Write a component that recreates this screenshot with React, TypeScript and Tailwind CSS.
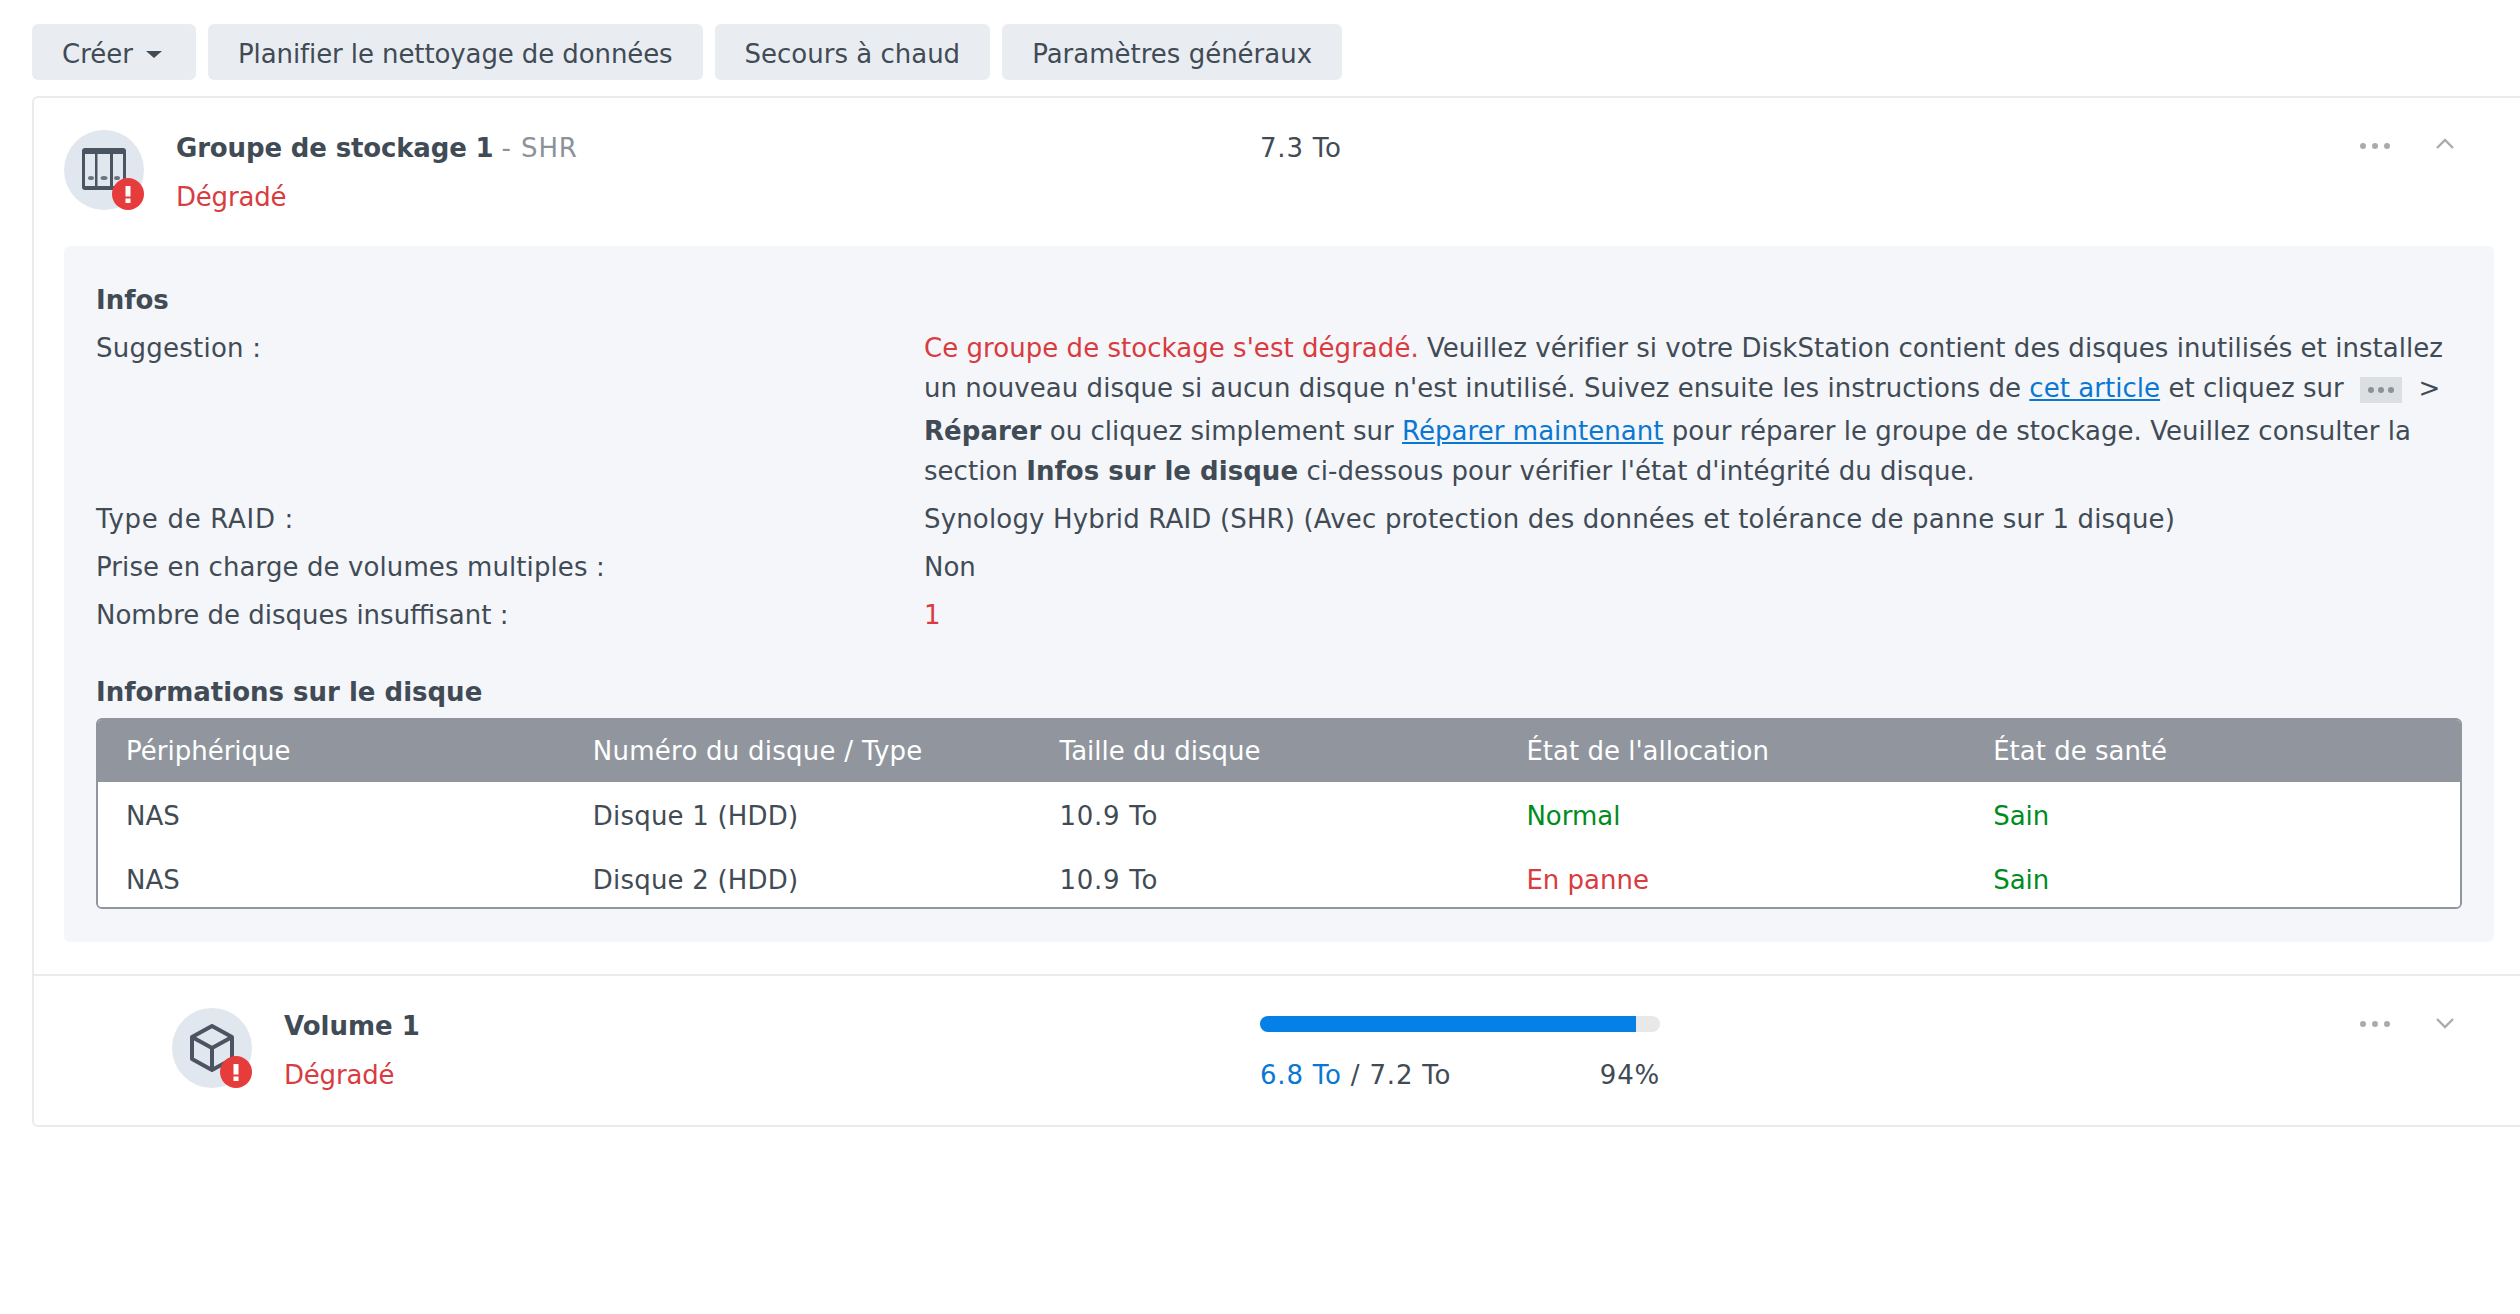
const rows = [
  { device: 'NAS', disk: 'Disque 1 (HDD)', size: '10.9 To', alloc: 'Normal', allocColor: 'text-[#008c1e]' },
  { device: 'NAS', disk: 'Disque 2 (HDD)', size: '10.9 To', alloc: 'En panne', allocColor: 'text-[#d93b3f]' },
];

function Dots() {
  return (
    <svg width="30" height="6" viewBox="0 0 30 6" fill="#a8acb0">
      <circle cx="3" cy="3" r="3" />
      <circle cx="15" cy="3" r="3" />
      <circle cx="27" cy="3" r="3" />
    </svg>
  );
}

function Chevron({ up }: { up?: boolean }) {
  return (
    <svg width="18" height="11" viewBox="0 0 18 11" fill="none" stroke="#a8acb0" strokeWidth="2.4" className={up ? '-translate-y-[3px]' : ''}>
      <path d={up ? 'M1 10 L9 2 L17 10' : 'M1 1 L9 9 L17 1'} />
    </svg>
  );
}

function Badge() {
  return (
    <svg width="32" height="32" viewBox="0 0 32 32" className="absolute right-0 bottom-0">
      <circle cx="16" cy="16" r="16" fill="#e63c3c" />
      <rect x="13.5" y="8" width="5" height="10.5" fill="#fff" />
      <rect x="13.5" y="20.5" width="5" height="4.5" fill="#fff" />
    </svg>
  );
}

function Actions({ up }: { up?: boolean }) {
  return (
    <div className="ml-auto flex items-center gap-[46px] pr-[84px]">
      <Dots />
      <Chevron up={up} />
    </div>
  );
}

function Row({ label, labelClass, children }: { label: string; labelClass?: string; children: React.ReactNode }) {
  return (
    <div className="flex py-1">
      <div className={`w-[828px] shrink-0 ${labelClass ?? ''}`}>{label}</div>
      <div className="flex-1">{children}</div>
    </div>
  );
}

export default function App() {
  return (
    <div className="h-[1314px] overflow-hidden bg-white pt-6 pl-8 font-['DejaVu_Sans',sans-serif] text-[26px] leading-10 text-[#414b55]">
      <div className="flex gap-3">
        <button className="flex h-14 items-center gap-[13px] rounded-md bg-[#e9edf2] pt-1 pr-[34px] pl-[30px]">
          Créer
          <span className="h-0 w-0 border-x-[8px] border-t-[7px] border-x-transparent border-t-[#414b55]" />
        </button>
        <button className="h-14 rounded-md bg-[#e9edf2] px-[30px] pt-1 tracking-[-0.1px]">Planifier le nettoyage de données</button>
        <button className="h-14 rounded-md bg-[#e9edf2] px-[30px] pt-1">Secours à chaud</button>
        <button className="h-14 rounded-md bg-[#e9edf2] px-[30px] pt-1">Paramètres généraux</button>
      </div>

      <div className="mt-4 mr-[-20px] rounded-l-md border-2 border-[#ebebeb]">
        <div className="flex h-[148px] pt-8 pl-[30px]">
          <div className="relative flex h-20 w-20 shrink-0 items-center justify-center rounded-full bg-[#e1e7ee]">
            <svg width="44" height="42" viewBox="0 0 44 42" className="-translate-y-[1px]">
              <rect x="0" y="0" width="44" height="42" rx="3" fill="#4a5561" />
              <rect x="3" y="6" width="10" height="32" fill="#e1e7ee" />
              <rect x="15.5" y="6" width="12.5" height="32" fill="#e1e7ee" />
              <rect x="31" y="6" width="10" height="32" fill="#e1e7ee" />
              <ellipse cx="9" cy="30" rx="3" ry="2" fill="#6b7580" />
              <ellipse cx="22" cy="30" rx="3.5" ry="2" fill="#6b7580" />
              <ellipse cx="35" cy="30" rx="3" ry="2" fill="#6b7580" />
            </svg>
            <Badge />
          </div>
          <div className="ml-8 w-[1084px] shrink-0">
            <div className="-mt-[2px] flex h-10 items-center">
              <span className="font-bold tracking-[-0.15px]">Groupe de stockage 1</span>
              <span className="ml-2 tracking-[0.9px] text-[#8c9299]">- SHR</span>
            </div>
            <div className="mt-[9px] tracking-[-0.2px] text-[#d93b3f]">Dégradé</div>
          </div>
          <div className="-mt-[2px] tracking-[0.8px]">7.3 To</div>
          <div className="-mt-[4px] flex h-10 flex-1 items-center">
            <Actions up />
          </div>
        </div>

        <div className="mr-[44px] ml-[30px] rounded-md bg-[#f4f6fa] pt-[30px] pr-[32px] pb-[33px] pl-[32px]">
          <div className="py-1 font-bold">Infos</div>
          <Row label="Suggestion :" labelClass="tracking-[0.25px]">
            <span className="tracking-[0.04px]">
              <span className="text-[#d93b3f]">Ce groupe de stockage s'est dégradé.</span> Veuillez vérifier si votre DiskStation contient des disques inutilisés et installez un nouveau disque si aucun disque n'est inutilisé. Suivez ensuite les instructions de{' '}
              <a className="text-[#0a78d2] underline">cet article</a> et cliquez sur{' '}
              <span className="mx-2 my-[8px] inline-flex h-[26px] w-[42px] items-center justify-center bg-[#dcdfe2] align-middle">
                <svg width="26" height="6" viewBox="0 0 26 6" fill="#8c9299">
                  <circle cx="3" cy="3" r="3" />
                  <circle cx="13" cy="3" r="3" />
                  <circle cx="23" cy="3" r="3" />
                </svg>
              </span>{' '}
              &gt; <b>Réparer</b> ou cliquez simplement sur <a className="text-[#0a78d2] underline">Réparer maintenant</a> pour réparer le groupe de stockage. Veuillez consulter la section <b>Infos sur le disque</b> ci-dessous pour vérifier l'état d'intégrité du disque.
            </span>
          </Row>
          <Row label="Type de RAID :" labelClass="tracking-[0.7px]">
            <span className="tracking-[0.165px]">Synology Hybrid RAID (SHR) (Avec protection des données et tolérance de panne sur 1 disque)</span>
          </Row>
          <Row label="Prise en charge de volumes multiples :" labelClass="tracking-[0.1px]">Non</Row>
          <Row label="Nombre de disques insuffisant :">
            <span className="text-[#d93b3f]">1</span>
          </Row>

          <div className="mt-[33px] font-bold">Informations sur le disque</div>
          <div className="mt-[6px] overflow-hidden rounded-md border-2 border-[#91969e]">
            <div className="grid h-[62px] grid-cols-5 items-center bg-[#91969e] pl-[28px] text-white">
              <div>Périphérique</div>
              <div className="tracking-[0.25px]">Numéro du disque / Type</div>
              <div>Taille du disque</div>
              <div>État de l'allocation</div>
              <div>État de santé</div>
            </div>
            <div className="flex flex-col gap-6 bg-white pt-[14px] pb-[7px] pl-[28px]">
              {rows.map((row) => (
                <div key={row.disk} className="grid grid-cols-5">
                  <div>{row.device}</div>
                  <div className="tracking-[0.2px]">{row.disk}</div>
                  <div className="tracking-[0.7px]">{row.size}</div>
                  <div className={row.allocColor}>{row.alloc}</div>
                  <div className="text-[#008c1e]">Sain</div>
                </div>
              ))}
            </div>
          </div>
        </div>

        <div className="mt-8 flex h-[151px] border-t-2 border-[#ebebeb] pt-8 pl-[138px]">
          <div className="relative flex h-20 w-20 shrink-0 items-center justify-center rounded-full bg-[#e1e7ee]">
            <svg width="44" height="48" viewBox="0 0 44 48" fill="none" stroke="#4a5561" strokeWidth="4" strokeLinejoin="round">
              <path d="M22 2 L42 13 V35 L22 46 L2 35 V13 Z" />
              <path d="M2 13 L22 24 L42 13 M22 24 V46" />
            </svg>
            <Badge />
          </div>
          <div className="ml-8 w-[976px] shrink-0">
            <div className="-mt-[2px] font-bold">Volume 1</div>
            <div className="mt-[9px] tracking-[-0.2px] text-[#d93b3f]">Dégradé</div>
          </div>
          <div className="w-[400px] shrink-0">
            <div className="mt-[8px] h-4 overflow-hidden rounded-full bg-[#e8e8e8]">
              <div className="h-full w-[94%] bg-[#0580e6]" />
            </div>
            <div className="mt-[23px] flex justify-between tracking-[0.8px]">
              <span>
                <span className="text-[#0a78d2]">6.8 To</span> / 7.2 To
              </span>
              <span>94%</span>
            </div>
          </div>
          <div className="-mt-[4px] flex h-10 flex-1 items-center">
            <Actions />
          </div>
        </div>
      </div>
    </div>
  );
}
